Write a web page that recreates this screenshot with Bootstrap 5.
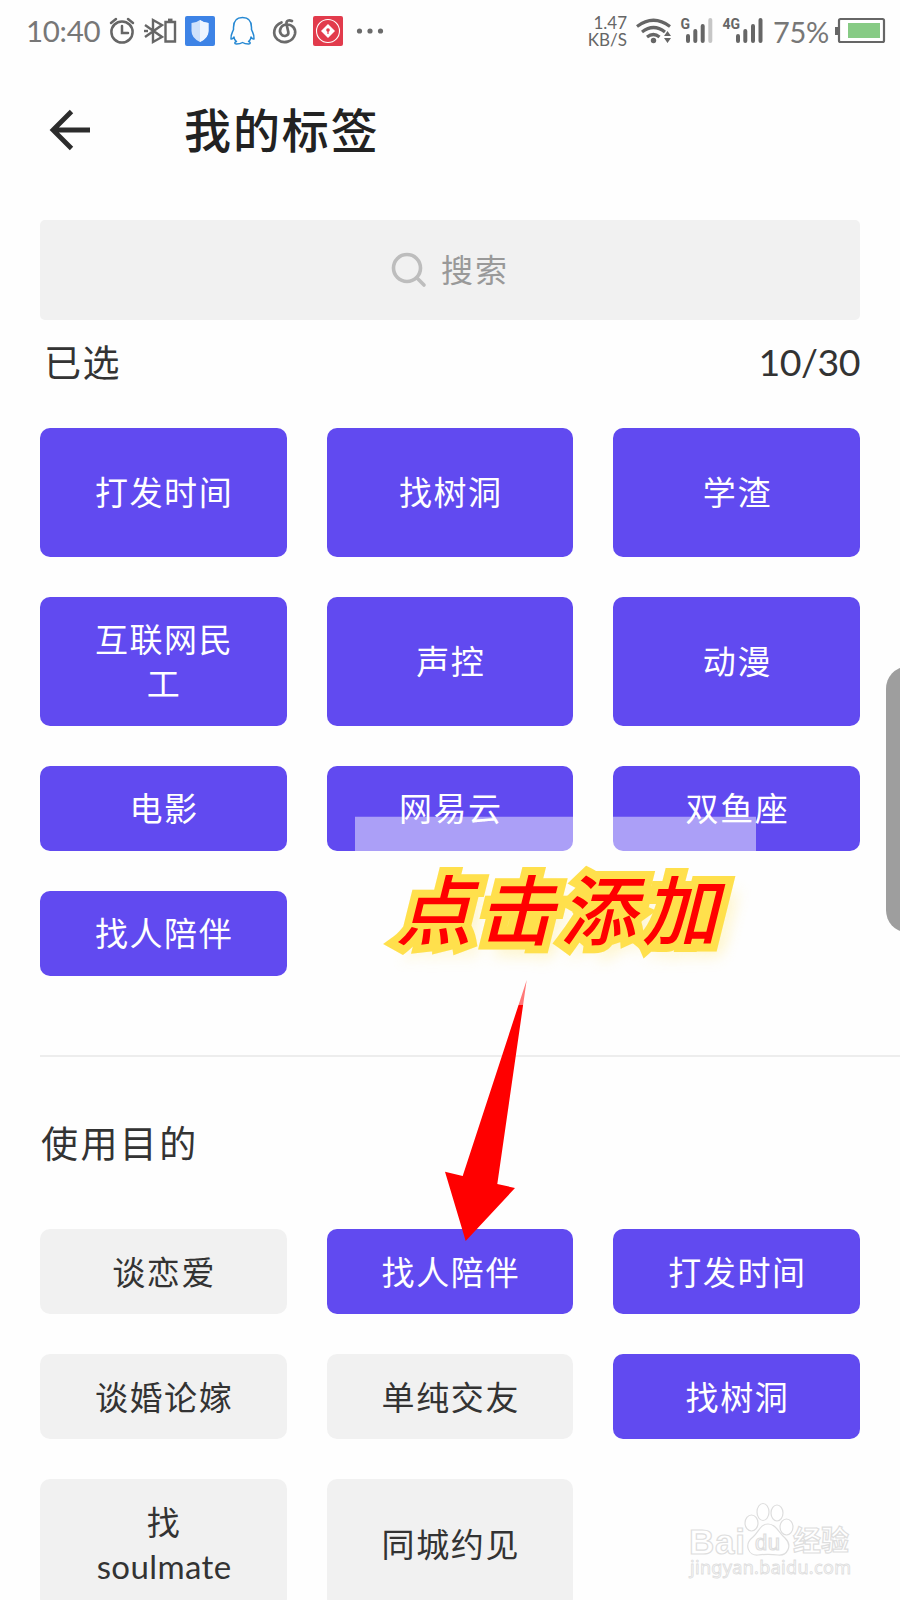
<!DOCTYPE html>
<html lang="zh-CN">
<head>
<meta charset="utf-8">
<meta name="viewport" content="width=device-width, initial-scale=1">
<title>我的标签</title>
<link href="https://cdn.jsdelivr.net/npm/bootstrap@5.3.0/dist/css/bootstrap.min.css" rel="stylesheet">
<style>
  body { font-family: Lato, "Noto Sans CJK SC", sans-serif; color: #333; background: #fefefe; overflow: hidden; }
  .screen { width: 900px; height: 1600px; }
  .status { height: 62px; color: #777; line-height: 1; }
  .status svg { display: block; flex: none; }
  .clock { width: 80px; margin-left: 26px; font-size: 29.5px; white-space: nowrap; letter-spacing: -.3px; }
  .speed { width: 40px; font-size: 17px; line-height: 17px; text-align: right; color: #666; white-space: nowrap; }
  .speed span { display: block; }
  .percent { width: 61px; padding-right: 3px; font-size: 29px; text-align: right; white-space: nowrap; letter-spacing: -.3px; }
  .topbar { height: 136px; }
  .page-title { font-size: 47px; letter-spacing: 1.9px; color: #222; line-height: 1; }
  .search { height: 100px; margin-top: 22px; background: #f1f1f1; border-radius: 5px; color: #999; font-size: 32px; letter-spacing: 2px; }
  .search svg { margin-right: 14px; }
  .picked { height: 84px; margin-bottom: 23.5px; font-size: 37px; letter-spacing: 1.5px; line-height: 1; }
  .picked .num { font-size: 37.5px; letter-spacing: -.5px; }
  .tags { display: grid; grid-template-columns: repeat(3, 1fr); gap: 40px; }
  .tag { display: flex; align-items: center; justify-content: center; text-align: center; border: 0; min-height: 85px; padding: 20.5px 50px; border-radius: 10px; background: #f1f1f1; color: #333; font-size: 33px; letter-spacing: 1.6px; line-height: 44px; }
  .tag > span { margin-right: -1.6px; min-width: 0; }
  .tag.on { background: #614af0; color: #fff; }
  .tag.tall { min-height: 129px; }
  .tag .latin { letter-spacing: .4px; }
  .rule { height: 2px; margin: 79.5px 0 0 40px; background: #ededed; }
  .group-title { font-size: 37px; letter-spacing: 2.4px; line-height: 1; height: 172px; padding-left: 1px; }
  .overlay { position: absolute; left: 0; top: 0; pointer-events: none; }
</style>
</head>
<body>
<div class="screen position-relative overflow-hidden">
  <header class="status d-flex align-items-center justify-content-between">
    <div class="d-flex align-items-center">
      <span class="clock">10:40</span>
      <svg width="34" height="62" viewBox="106 0 34 62" fill="none" stroke="#666" stroke-width="2.5" stroke-linecap="round"><circle cx="122" cy="32" r="10.6"/><path d="M122 26v7h6M111 23l5-4M133 23l-5-4"/></svg>
      <svg width="40" height="62" viewBox="140 0 40 62" fill="none" stroke="#666" stroke-width="2.4"><path d="M145 25l17 12-9 5V20l9 5-17 12"/><path d="M144 31h4"/><path d="M165.500 22h9.500v19.500h-9.500z"/><path d="M168 19.800h4.500"/></svg>
      <svg width="42" height="62" viewBox="180 0 42 62"><rect x="185" y="16" width="30" height="30" rx="2" fill="#3d83e6"/><path d="M200 20q4 3 8.500 3v8q0 7-8.500 11-8.500-4-8.500-11v-8q4.500 0 8.500-3z" fill="#cfe1fb"/><path d="M200 20q4 3 8.500 3v8q0 7-8.500 11z" fill="#eef5ff"/></svg>
      <svg width="42" height="62" viewBox="222 0 42 62" fill="none" stroke="#2588d3" stroke-width="1.5" stroke-linejoin="round"><path d="M242.500 17.500c-6 0-9 4-9 10v2c-1 3-3 5-2.500 9.500 1 .5 2-1 3-2 0 2 1 3.500 2.500 4.500-2 .5-2.500 2.500 0 2.500 3 0 4.500-.5 6-1.500 1.500 1 3 1.500 6 1.500 2.500 0 2-2 0-2.500 1.500-1 2.500-2.500 2.500-4.500 1 1 2 2.500 3 2 .5-4.500-1.500-6.500-2.500-9.500v-2c0-6-3-10-9-10z"/></svg>
      <svg width="42" height="62" viewBox="264 0 42 62" fill="none" stroke="#6a6a6a" stroke-width="2.700" stroke-linecap="round"><path d="M281.500 22.500c-8 3-9.500 12-4 17 6 5 15.500 2.500 17.500-5.500 1-6-3-9.500-8-9.500-6 0-8.500 6-6 9.500 2.500 3.500 8 2 7.300-2l-1.800-8c-.5-3.500 2.500-4.500 5.500-3"/></svg>
      <svg width="44" height="62" viewBox="306 0 44 62"><rect x="313" y="16" width="30" height="30" rx="2" fill="#e23b4c"/><circle cx="328" cy="31" r="11.500" fill="none" stroke="#fff" stroke-width="1.100"/><path d="M328 24l7 7-7 7-7-7z" fill="#fff"/><circle cx="328" cy="30" r="1.800" fill="#e23b4c"/><path d="M327.400 31h1.200v3h-1.200z" fill="#e23b4c"/></svg>
      <svg width="40" height="62" viewBox="350 0 40 62" fill="#6b6b6b"><circle cx="359.500" cy="31" r="2.600"/><circle cx="370" cy="31" r="2.600"/><circle cx="380.500" cy="31" r="2.600"/></svg>
    </div>
    <div class="d-flex align-items-center">
      <div class="speed"><span>1.47</span><span>KB/S</span></div>
      <svg width="46" height="62" viewBox="627 0 46 62" fill="none" stroke="#666" stroke-width="3.200"><path d="M637 26.500q16.500-12.500 33 0M642 32q11.500-9 23 0M647 37q6.500-5 12.500 0"/><circle cx="653.500" cy="40.500" r="2.700" fill="#666" stroke="none"/><path d="M664 36l3.500-5 3.500 5zM664 38l3.500 5 3.500-5z" fill="#666" stroke="none"/></svg>
      <svg width="98" height="62" viewBox="673 0 98 62" stroke="#666" stroke-width="4" stroke-linecap="round"><path d="M688 36v5M695.300 31v10M702.700 26v15M738 36v5M745.300 31v10M753 26v15M760.500 20v21"/><path d="M710.300 20v21" stroke="#c6c6c6"/><g fill="#666" stroke="none" font-family="Roboto, sans-serif" font-weight="700" font-size="14"><text x="680.500" y="28.500">G</text><text x="722.500" y="28.500">4G</text></g></svg>
      <span class="percent">75%</span>
      <svg width="68" height="62" viewBox="832 0 68 62"><path d="M835 27h4v8h-4z" fill="#666"/><rect x="839" y="19" width="45" height="23" rx="1.500" fill="#fff" stroke="#666" stroke-width="2.200"/><path d="M848 23h32v15h-32z" fill="#87cb85"/></svg>
    </div>
  </header>

  <nav class="topbar d-flex align-items-center">
    <svg width="184" height="136" viewBox="0 62 184 136" fill="none" stroke="#2c2c2c" stroke-width="4.800"><path d="M90 130H53M71.500 111.500L53 130l18.500 18.500"/></svg>
    <h1 class="page-title m-0 fw-medium" style="font-weight:500">我的标签</h1>
  </nav>

  <main>
    <div class="px-4 mx-3">
      <div class="search d-flex align-items-center justify-content-center">
        <svg width="36" height="36" viewBox="0 0 36 36" fill="none" stroke="#bdbdbd" stroke-width="3.600" stroke-linecap="round"><circle cx="16" cy="16" r="13.500"/><path d="M26 26l7 7"/></svg>
        <span>搜索</span>
      </div>
      <div class="picked d-flex align-items-center justify-content-between"><span class="ps-1">已选</span><span class="num">10/30</span></div>
      <div class="tags">
        <div class="tag on tall"><span>打发时间</span></div>
        <div class="tag on tall"><span>找树洞</span></div>
        <div class="tag on tall"><span>学渣</span></div>
        <div class="tag on"><span>互联网民工</span></div>
        <div class="tag on"><span>声控</span></div>
        <div class="tag on"><span>动漫</span></div>
        <div class="tag on"><span>电影</span></div>
        <div class="tag on"><span>网易云</span></div>
        <div class="tag on"><span>双鱼座</span></div>
        <div class="tag on"><span>找人陪伴</span></div>
      </div>
    </div>
    <div class="rule"></div>
    <div class="px-4 mx-3">
      <h2 class="group-title m-0 fw-normal d-flex align-items-center">使用目的</h2>
      <div class="tags">
        <div class="tag"><span>谈恋爱</span></div>
        <div class="tag on"><span>找人陪伴</span></div>
        <div class="tag on"><span>打发时间</span></div>
        <div class="tag"><span>谈婚论嫁</span></div>
        <div class="tag"><span>单纯交友</span></div>
        <div class="tag on"><span>找树洞</span></div>
        <div class="tag"><span>找<br><span class="latin">soulmate</span></span></div>
        <div class="tag"><span>同城约见</span></div>
      </div>
    </div>
  </main>

  <!-- Annotation, scroll handle and watermark lie over the page -->
  <svg class="overlay" width="900" height="1600" viewBox="0 0 900 1600">
    <defs><filter id="glow" x="-20%" y="-40%" width="150%" height="200%"><feGaussianBlur stdDeviation="8"/></filter></defs>
    <path d="M526.700 980L462.700 1176 445 1171.700 465.700 1241 515 1188 497.300 1184z" fill="#f00"/>
    <path d="M355 816.700h401V1005H355z" fill="#fff" fill-opacity=".47"/>
    <g transform="translate(396 939) skewX(-14)" font-family="Noto Sans CJK SC, sans-serif" font-weight="500" font-size="76" letter-spacing="6">
      <text x="12" y="12" fill="#ffe04c" opacity=".5" filter="url(#glow)" aria-hidden="true">点击添加</text>
      <text fill="#f00" stroke="#ffe04c" stroke-width="16" stroke-linejoin="miter" stroke-miterlimit="3" paint-order="stroke">点击添加</text>
    </g>
    <rect x="886" y="667" width="40" height="265" rx="22" fill="#9e9e9e"/>
    <g fill="#fff" stroke="#dedede" stroke-width="1.200">
      <text x="689" y="1554" font-family="Liberation Sans, sans-serif" font-weight="700" font-size="35" textLength="56">Bai</text>
      <ellipse cx="751.500" cy="1523" rx="6.500" ry="8"/><ellipse cx="763" cy="1512" rx="6" ry="8.500"/><ellipse cx="777" cy="1513" rx="6" ry="8"/><ellipse cx="786.500" cy="1527" rx="6.500" ry="8"/>
      <path d="M768 1524c-8 0-9 8-15 13-10 8-4 19 5 18 7-1 13-1 20 0 9 1 15-9 7-17-6-5-9-14-17-14z"/>
      <text x="755" y="1550" font-family="Liberation Sans, sans-serif" font-size="22" textLength="25">du</text>
      <text x="793" y="1551" font-family="Noto Sans CJK SC, sans-serif" font-weight="700" font-size="28" textLength="56">经验</text>
      <text x="690" y="1574" font-family="Noto Sans, sans-serif" font-size="18" stroke-width=".9" textLength="161">jingyan.baidu.com</text>
    </g>
  </svg>
</div>
<script src="https://cdn.jsdelivr.net/npm/bootstrap@5.3.0/dist/js/bootstrap.bundle.min.js"></script>
</body>
</html>
